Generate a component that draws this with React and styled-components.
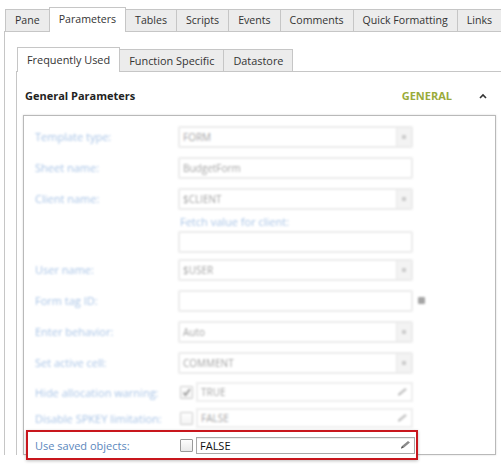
import React from "react";
import styled, { createGlobalStyle } from "styled-components";

const Global = createGlobalStyle`
  body {
    margin: 0;
    background: #fff;
    font-family: "Open Sans", "Liberation Sans", sans-serif;
    font-size: 11px;
    color: #333;
  }
`;

const Page = styled.div`
  width: 501px;
  height: 466px;
  overflow: hidden;
  padding: 7px 0 0 4px;
  box-sizing: border-box;
`;

const TabStrip = styled.div`
  display: flex;
  align-items: flex-end;
  padding-left: 1px;
  border-bottom: 1px solid #c6c6c6;
  white-space: nowrap;
`;

const Tab = styled.div`
  box-sizing: border-box;
  height: ${(p) => (p.$active ? "25px" : "22px")};
  margin-bottom: ${(p) => (p.$active ? "-1px" : "0")};
  padding: ${(p) => (p.$active ? "4px" : "3px")} 9px 0;
  border: 1px solid #c6c6c6;
  border-bottom: none;
  margin-right: -1px;
  background: ${(p) => (p.$active ? "#fff" : "#ececec")};
  color: #333;
  font-size: ${(p) => p.$size || 10.6}px;
  line-height: 15px;
  position: relative;
  z-index: ${(p) => (p.$active ? 1 : 0)};
`;

const Panel = styled.div`
  border-left: 1px solid #c6c6c6;
  padding: 15px 0 0 11px;
`;

const InnerPanel = styled.div`
  border-left: 1px solid #c6c6c6;
  padding: 0 5px 0 6px;
`;

const Header = styled.div`
  display: flex;
  align-items: center;
  padding: 16px 9px 11px 2px;
  line-height: 16px;
`;

const Title = styled.div`
  font-weight: 700;
  color: #222;
  flex: 1;
`;

const Section = styled.div`
  font-weight: 700;
  color: #9aab3b;
  margin-right: 27px;
`;

const Box = styled.div`
  border: 1px solid #b9b9b9;
  box-shadow: 0 0 2px rgba(0, 0, 0, 0.15);
  padding-top: 5px;
  height: 340px;
  box-sizing: border-box;
`;

const Faded = styled.div`
  opacity: 0.5;
  filter: blur(0.9px);
`;

const Row = styled.div`
  display: grid;
  grid-template-columns: 143px 235px 12px;
  align-items: center;
  height: ${(p) => p.$h || 31}px;
  padding-left: 11px;
`;

const Highlight = styled.div`
  display: grid;
  grid-template-columns: 143px 237px;
  align-items: center;
  width: 392px;
  height: 30px;
  box-sizing: border-box;
  margin-left: 2px;
  padding-left: 7px;
  border: 2px solid #c8161d;
  box-shadow: 0 1px 3px rgba(0, 0, 0, 0.25);
  background: #fff;
`;

const Label = styled.div`
  color: ${(p) => (p.$strong ? "#5b87bd" : "#4e86cc")};
  white-space: nowrap;
`;

const Input = styled.div`
  box-sizing: border-box;
  height: 22px;
  border: 2px solid #d8d8d8;
  border-radius: 2px;
  background: #fff;
  display: flex;
  align-items: center;
  padding-left: 3px;
  font-size: 10px;
  color: #444;
  position: relative;
`;

const DropBtn = styled.div`
  position: absolute;
  right: 0;
  top: 0;
  bottom: 0;
  width: 14px;
  background: #e6e6e6;
  border-left: 1px solid #cfcfcf;
  display: flex;
  align-items: center;
  justify-content: center;
  &::after {
    content: "";
    width: 4px;
    height: 4px;
    background: #9a9a9a;
  }
`;

const FetchBlock = styled.div`
  display: grid;
  grid-template-columns: 143px 235px;
  padding-left: 11px;
  height: 40px;
`;

const FetchLink = styled.div`
  grid-column: 2;
  color: #4e86cc;
  line-height: 14px;
  margin-top: 1px;
  margin-left: 2px;
`;

const FetchInput = styled(Input)`
  grid-column: 2;
`;

const Check = styled.div`
  width: 13px;
  height: 13px;
  box-sizing: border-box;
  border: 1px solid #9a9a9a;
  border-radius: 1px;
  background: linear-gradient(#fdfdfd, #e9e9e9);
  display: flex;
  align-items: center;
  justify-content: center;
  flex: none;
`;

const CheckField = styled.div`
  display: flex;
  align-items: center;
  gap: 3px;
  margin-left: 2px;
`;

const FlagInput = styled(Input)`
  flex: 1;
  height: ${(p) => p.$h || 20}px;
  font-size: ${(p) => (p.$sharp ? "11px" : "10px")};
  color: ${(p) => (p.$sharp ? "#111" : "#444")};
  border: ${(p) => (p.$sharp ? "1px solid #a9a9a9" : "2px solid #dedede")};
  border-radius: 0;
  box-shadow: ${(p) => (p.$sharp ? "inset 0 1px 1px rgba(0,0,0,0.08)" : "none")};
`;

const Pen = styled.svg`
  position: absolute;
  right: 3px;
  top: 50%;
  transform: translateY(-50%);
`;

const TagIcon = styled.div`
  width: 7px;
  height: 7px;
  background: #4a4a4a;
  margin-left: 5px;
  border-radius: 1px;
`;

const PenIcon = () => (
  <Pen width="12" height="10" viewBox="0 0 12 10">
    <path d="M2 8.5 L3 6 L9 1 L11 2.6 L5 7.6 Z" fill="#8a8a8a" />
    <path d="M2 8.5 L3 6 L4.6 7.8 Z" fill="#555" />
  </Pen>
);

const Chevron = () => (
  <svg width="8" height="6" viewBox="0 0 8 6">
    <path d="M1 5 L4 2 L7 5" fill="none" stroke="#333" strokeWidth="1.6" />
  </svg>
);

const top = ["Pane", "Parameters", "Tables", "Scripts", "Events", "Comments", "Quick Formatting", "Links"];
const sub = ["Frequently Used", "Function Specific", "Datastore"];

const fields = [
  { label: "Template type:", value: "FORM", select: true },
  { label: "Sheet name:", value: "BudgetForm" },
  { label: "Client name:", value: "$CLIENT", select: true },
];

const more = [
  { label: "User name:", value: "$USER", select: true },
  { label: "Form tag ID:", value: "", tag: true },
  { label: "Enter behavior:", value: "Auto", select: true },
  { label: "Set active cell:", value: "COMMENT", select: true },
];

const Field = ({ f }) => (
  <Row>
    <Label>{f.label}</Label>
    <Input>
      {f.value}
      {f.select && <DropBtn />}
    </Input>
    {f.tag ? <TagIcon /> : <span />}
  </Row>
);

const App = () => (
  <Page>
    <Global />
    <TabStrip>
      {top.map((t) => (
        <Tab key={t} $active={t === "Parameters"}>{t}</Tab>
      ))}
    </TabStrip>
    <Panel>
      <TabStrip>
        {sub.map((t) => (
          <Tab key={t} $size={10.9} $active={t === "Frequently Used"}>{t}</Tab>
        ))}
      </TabStrip>
      <InnerPanel>
        <Header>
          <Title>General Parameters</Title>
          <Section>GENERAL</Section>
          <Chevron />
        </Header>
        <Box>
          <Faded>
            {fields.map((f) => (
              <Field key={f.label} f={f} />
            ))}
            <FetchBlock>
              <FetchLink>Fetch value for client:</FetchLink>
              <FetchInput />
            </FetchBlock>
            {more.map((f) => (
              <Field key={f.label} f={f} />
            ))}
            <Row $h={28}>
              <Label>Hide allocation warning:</Label>
              <CheckField>
                <Check>
                  <svg width="9" height="9" viewBox="0 0 9 9">
                    <path d="M1.5 4.5 L3.5 7 L8 1" fill="none" stroke="#333" strokeWidth="1.8" />
                  </svg>
                </Check>
                <FlagInput>TRUE<PenIcon /></FlagInput>
              </CheckField>
              <span />
            </Row>
            <Row $h={24}>
              <Label>Disable SPKEY limitation:</Label>
              <CheckField>
                <Check />
                <FlagInput>FALSE<PenIcon /></FlagInput>
              </CheckField>
              <span />
            </Row>
          </Faded>
          <Highlight>
            <Label $strong>Use saved objects:</Label>
            <CheckField>
              <Check />
              <FlagInput $sharp $h={17}>FALSE<PenIcon /></FlagInput>
            </CheckField>
          </Highlight>
        </Box>
      </InnerPanel>
    </Panel>
  </Page>
);

export default App;
